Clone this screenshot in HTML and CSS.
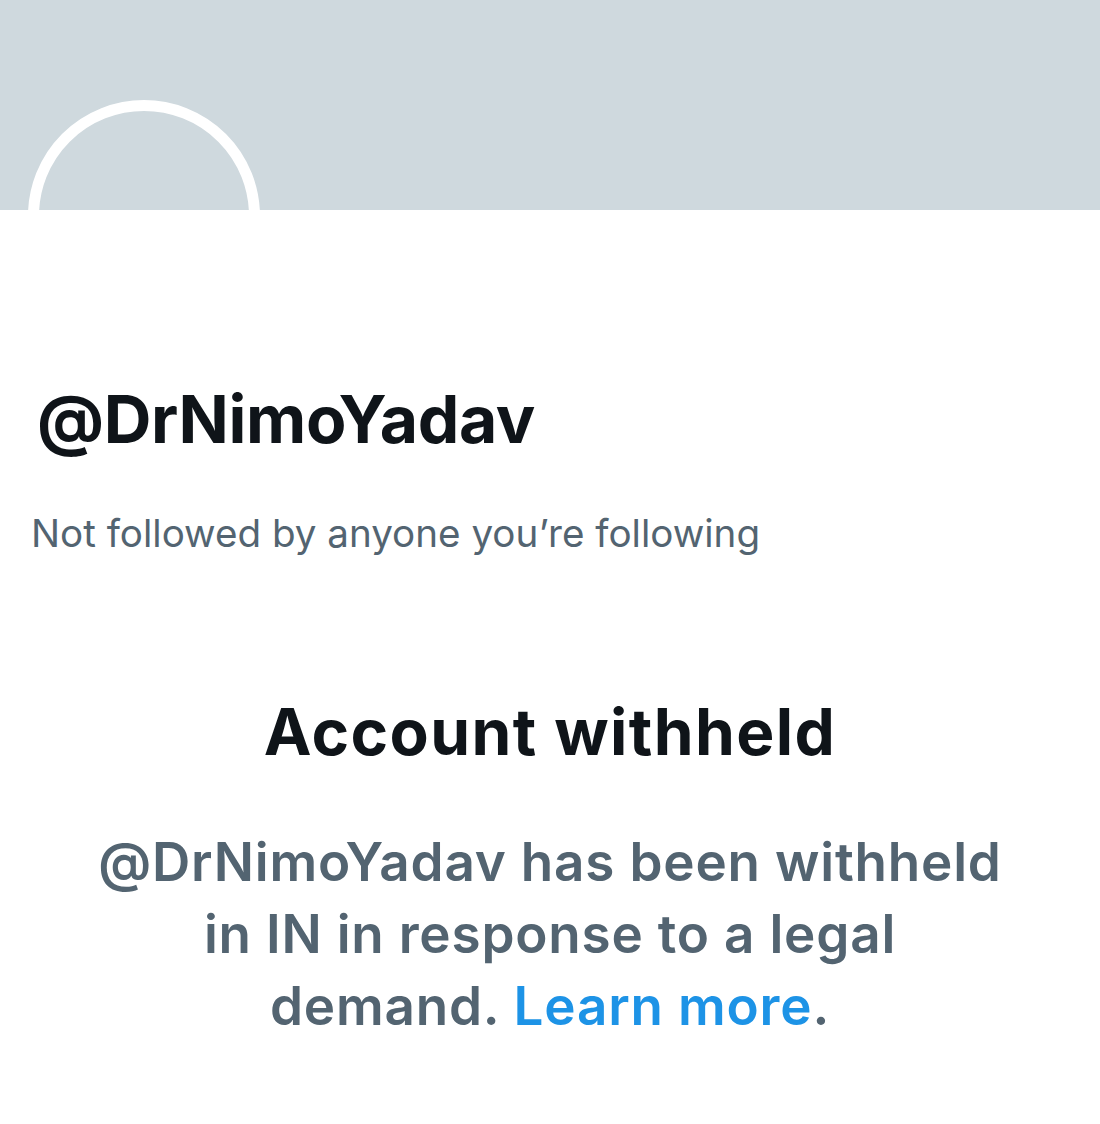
FILE: index.html
```html
<!DOCTYPE html>
<html lang="en">
<head>
<meta charset="utf-8">
<title>@DrNimoYadav</title>
<link rel="stylesheet" href="styles.css">
</head>
<body>
<div class="page">
  <header class="banner">
    <div class="avatar"></div>
  </header>
  <section class="profile">
    <h1 class="handle">@DrNimoYadav</h1>
    <p class="followers">Not followed by anyone you’re following</p>
  </section>
  <section class="notice">
    <h2 class="notice-title">Account withheld</h2>
    <p class="notice-text">@DrNimoYadav has been withheld<br>in IN in response to a legal<br>demand. <a class="link" href="#">Learn more</a>.</p>
  </section>
</div>
</body>
</html>
```
FILE: styles.css
```css
html, body {
  margin: 0;
  padding: 0;
  background: #ffffff;
}
body {
  font-family: Inter, "Noto Sans", sans-serif;
  color: #0f1419;
}
.page {
  width: 1100px;
  height: 1124px;
  overflow: hidden;
}
.banner {
  position: relative;
  height: 210px;
  background: #cfd9de;
  overflow: hidden;
}
.avatar {
  position: absolute;
  left: 28px;
  top: 100px;
  width: 210px;
  height: 210px;
  border: 11px solid #ffffff;
  border-radius: 50%;
  background: #cfd9de;
}
.profile {
  padding: 0 0 0 31px;
  margin-top: 171px;
}
.handle {
  margin: 0 0 0 6px;
  font-size: 66px;
  font-weight: 700;
  line-height: 76px;
  letter-spacing: -0.35px;
}
.followers {
  margin: 52px 0 0;
  font-size: 38.6px;
  font-weight: 400;
  line-height: 48px;
  color: #536471;
}
.notice {
  text-align: center;
  margin-top: 139px;
}
.notice-title {
  margin: 0;
  font-size: 64px;
  font-weight: 700;
  line-height: 72px;
  letter-spacing: 1.4px;
}
.notice-text {
  margin: 58px 0 0;
  font-size: 53px;
  font-weight: 600;
  line-height: 72px;
  letter-spacing: 0.8px;
  color: #536471;
}
.link {
  color: #1d93e6;
  text-decoration: none;
}
```
